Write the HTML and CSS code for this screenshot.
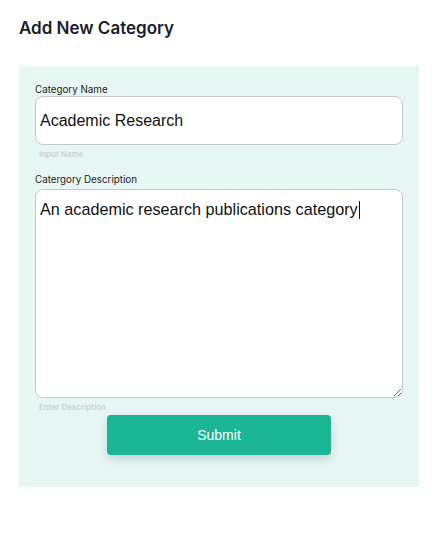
FILE: index.html
```html
<!DOCTYPE html>
<html lang="en">
<head>
<meta charset="utf-8">
<title>Add New Category</title>
<link rel="stylesheet" href="styles.css">
</head>
<body>
<main class="page">
  <h1 class="title">Add New Category</h1>
  <form class="panel">
    <label class="label" for="name">Category Name</label>
    <input class="field" id="name" type="text" value="Academic Research">
    <div class="hint">Input Name</div>
    <label class="label label-desc" for="desc">Catergory Description</label>
    <div class="area" id="desc" role="textbox" aria-multiline="true">An academic research publications category<span class="caret"></span></div>
    <div class="hint">Enter Description</div>
    <div class="actions">
      <button class="submit" type="button">Submit</button>
    </div>
  </form>
</main>
</body>
</html>
```
FILE: styles.css
```css
html, body {
  margin: 0;
  padding: 0;
  background: #ffffff;
}
.page {
  padding: 0 20px 0 19px;
  font-family: Inter, "Noto Sans", "Liberation Sans", sans-serif;
}
.title {
  margin: 0;
  padding-top: 16px;
  font-size: 17px;
  line-height: 24px;
  font-weight: 600;
  color: #1a1f2b;
}
.panel {
  margin-top: 26px;
  width: 400px;
  box-sizing: border-box;
  background: #e6f6f2;
  padding: 17px 16px 32px 16px;
  display: flex;
  flex-direction: column;
}
.label {
  font-size: 9.8px;
  line-height: 13px;
  color: #1e222b;
}
.label-desc {
  margin-top: 13px;
  margin-bottom: 3px;
}
.field,
.area {
  box-sizing: border-box;
  width: 368px;
  border: 1px solid #c5c9ce;
  border-radius: 8px;
  background: #ffffff;
  font-family: "Liberation Sans", Arial, sans-serif;
  font-size: 16.2px;
  color: #111111;
  margin: 0;
  outline: none;
}
.field {
  height: 49px;
  padding: 1px 4px 0 4px;
  font-size: 16px;
}
.area {
  height: 209px;
  padding: 10px 4px;
  resize: vertical;
  overflow: auto;
  line-height: normal;
}
.caret {
  display: inline-block;
  width: 1px;
  height: 18px;
  margin-left: 1px;
  vertical-align: -4px;
  background: #111111;
}
.field:focus {
  outline: none;
}
.hint {
  margin-top: 4px;
  padding-left: 4px;
  font-size: 8px;
  line-height: 11px;
  font-weight: 600;
  color: #cdd1d6;
}
.actions {
  display: flex;
  justify-content: center;
  margin-top: 2px;
}
.submit {
  width: 224px;
  height: 40px;
  border: none;
  border-radius: 4px;
  background: #19b595;
  color: #ffffff;
  font-family: "Liberation Sans", Arial, sans-serif;
  font-size: 14px;
  box-shadow: 0 4px 10px rgba(0, 0, 0, 0.14);
  cursor: pointer;
}
```
